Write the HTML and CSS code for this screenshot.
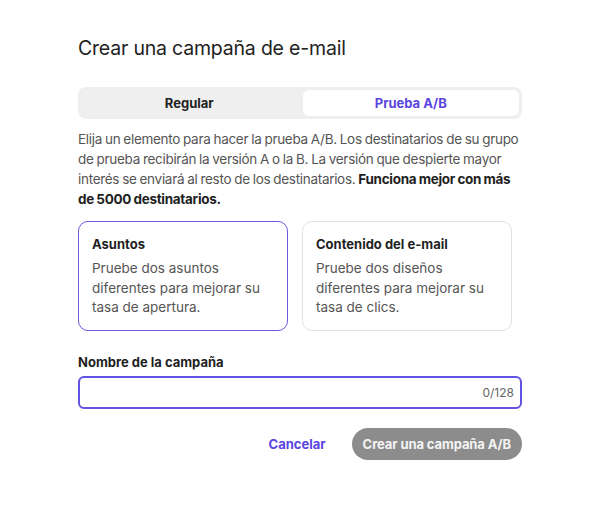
FILE: index.html
```html
<!DOCTYPE html>
<html lang="es">
<head>
    <meta charset="UTF-8">
    <meta name="viewport" content="width=device-width, initial-scale=1.0">
    <title>Crear una campaña de e-mail</title>
    <link rel="stylesheet" href="styles.css">
</head>
<body>
    <div class="dialog">
        <h1>Crear una campaña de e-mail</h1>

        <div class="tabs">
            <button type="button" class="tab">Regular</button>
            <button type="button" class="tab active">Prueba A/B</button>
        </div>

        <p class="intro">Elija un elemento para hacer la prueba A/B. Los destinatarios de su grupo de prueba recibirán la versión A o la B. La versión que despierte mayor interés se enviará al resto de los destinatarios. <strong>Funciona mejor con más de&nbsp;5000 destinatarios.</strong></p>

        <div class="options">
            <div class="option selected">
                <h3>Asuntos</h3>
                <p>Pruebe dos asuntos diferentes para mejorar su tasa de apertura.</p>
            </div>
            <div class="option">
                <h3>Contenido del e-mail</h3>
                <p>Pruebe dos diseños diferentes para mejorar su tasa de clics.</p>
            </div>
        </div>

        <div class="field">
            <label for="campaignName">Nombre de la campaña</label>
            <div class="input-wrap">
                <input type="text" id="campaignName" maxlength="128" autofocus>
                <span class="counter">0/128</span>
            </div>
        </div>

        <div class="actions">
            <button type="button" class="link-btn">Cancelar</button>
            <button type="button" class="primary-btn" disabled>Crear una campaña A/B</button>
        </div>
    </div>
</body>
</html>
```

FILE: styles.css
```css
body {
    font-family: 'Inter', 'Liberation Sans', sans-serif;
    background-color: #ffffff;
    margin: 0;
    color: #1f1f1f;
}
.dialog {
    width: 444px;
    padding: 36px 0 0 78px;
}
h1 {
    font-size: 19.5px;
    font-weight: 400;
    margin: 0 0 27px;
    line-height: 24px;
    color: #222;
    letter-spacing: -0.2px;
}
.tabs {
    display: flex;
    background-color: #efefef;
    border-radius: 8px;
    padding: 3px;
    height: 26px;
    margin-bottom: 10px;
}
.tab {
    flex: 1;
    border: none;
    background: transparent;
    font-family: inherit;
    font-size: 13px;
    font-weight: 700;
    color: #222;
    border-radius: 6px;
    cursor: pointer;
}
.tab.active {
    background-color: #ffffff;
    color: #5a45e0;
    margin-left: 5px;
}
.intro {
    font-size: 13.5px;
    line-height: 20px;
    color: #555;
    margin: 0 0 12px;
    letter-spacing: -0.3px;
    word-spacing: -0.5px;
}
.intro strong {
    color: #1f1f1f;
    font-weight: 700;
    letter-spacing: -0.3px;
}
.options {
    display: flex;
    gap: 14px;
    width: 434px;
    margin-bottom: 22px;
}
.option {
    flex: 1;
    border: 1px solid #e2e2e2;
    border-radius: 10px;
    padding: 13px;
    height: 82px;
}
.option.selected {
    border-color: #6a5ae0;
}
.option h3 {
    font-size: 13px;
    font-weight: 700;
    margin: 0 0 6px;
    line-height: 18px;
    color: #1f1f1f;
}
.option p {
    font-size: 13.5px;
    line-height: 19.5px;
    color: #555;
    margin: 0;
}
.field label {
    display: block;
    font-size: 13px;
    font-weight: 700;
    margin-bottom: 5px;
    line-height: 18px;
}
.input-wrap {
    position: relative;
}
.input-wrap input {
    width: 100%;
    box-sizing: border-box;
    height: 33px;
    border: 2px solid #6353e3;
    border-radius: 6px;
    padding: 0 50px 0 5px;
    font-family: inherit;
    font-size: 14px;
    outline: none;
}
.counter {
    position: absolute;
    right: 8px;
    top: 9px;
    font-size: 12px;
    color: #666;
}
.actions {
    display: flex;
    justify-content: flex-end;
    align-items: center;
    gap: 26px;
    margin-top: 19px;
}
.link-btn {
    border: none;
    background: transparent;
    font-family: inherit;
    font-size: 13px;
    font-weight: 700;
    color: #5a45e0;
    padding: 0;
    cursor: pointer;
}
.primary-btn {
    border: none;
    background-color: #8c8c8c;
    color: #f4f4f4;
    font-family: inherit;
    font-size: 13px;
    font-weight: 700;
    letter-spacing: -0.1px;
    height: 32px;
    padding: 0 11px;
    border-radius: 16px;
}
```
